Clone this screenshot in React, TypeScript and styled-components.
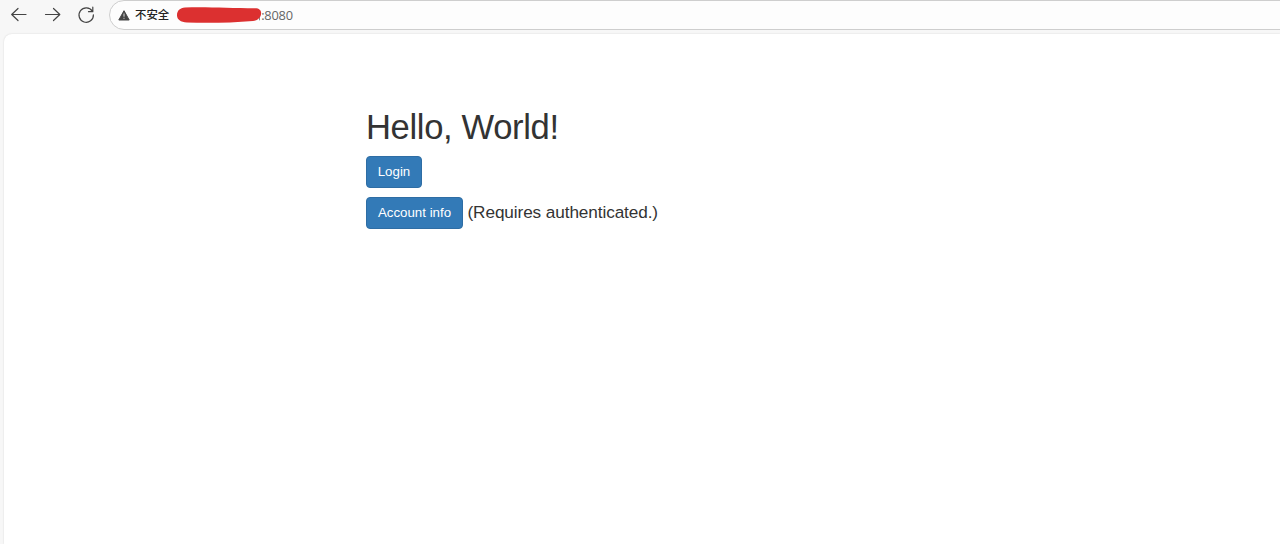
import React from "react";
import styled, { createGlobalStyle } from "styled-components";

const GlobalStyle = createGlobalStyle`
  * { box-sizing: border-box; }
  html, body { margin: 0; height: 100%; overflow: hidden; }
  body { font-family: "Liberation Sans", Arial, sans-serif; color: #333; }
`;

const Browser = styled.div`
  display: flex;
  flex-direction: column;
  height: 100vh;
  background: #f7f7f7;
  overflow: hidden;
`;

const Toolbar = styled.header`
  display: flex;
  align-items: flex-start;
  height: 34px;
  flex: none;
`;

const NavButtons = styled.nav`
  display: flex;
  width: 109px;
  padding: 5px 0 0 9px;
  gap: 14px;
  flex: none;
`;

const NavIcon = styled.svg`
  width: 20px;
  height: 20px;
  flex: none;
  fill: none;
  stroke: #444;
  stroke-width: 1.2;
  stroke-linecap: round;
  stroke-linejoin: round;
`;

const AddressBar = styled.div`
  display: flex;
  align-items: center;
  flex: 1;
  height: 30px;
  margin-right: -20px;
  padding: 0 0 1px 8px;
  background: #fdfdfd;
  border: 1px solid #cecece;
  border-radius: 15px;
`;

const WarningIcon = styled.svg`
  width: 12px;
  height: 12px;
  flex: none;
`;

const SecurityLabel = styled.span`
  margin-left: 5px;
  font: 500 11.4px/16px "Noto Sans CJK SC", sans-serif;
  padding-bottom: 1px;
  color: #222;
`;

const Redaction = styled.svg`
  width: 86px;
  height: 18px;
  margin: 0 -1px 0 7px;
  flex: none;
`;

const Port = styled.span`
  padding-top: 1px;
  font: 12.8px/16px "Open Sans", "Noto Sans", sans-serif;
  letter-spacing: -0.2px;
  color: #666;
`;

const Page = styled.main`
  flex: 1;
  margin-left: 4px;
  padding: 74px 0 0 362px;
  background: #fff;
  border-radius: 8px 0 0 0;
  box-shadow: 0 0 2px rgba(0, 0, 0, 0.14);
`;

const Title = styled.h1`
  margin: 0 0 10px;
  font-size: 34.6px;
  font-weight: 500;
  line-height: 38px;
  letter-spacing: -0.35px;
`;

const Row = styled.div`
  display: flex;
  align-items: center;
  height: 32px;
  margin-bottom: 9px;
`;

const Button = styled.button<{ $width: number }>`
  width: ${(p) => p.$width}px;
  height: 32px;
  padding: 0;
  font: 13.3px/18px "Liberation Sans", Arial, sans-serif;
  color: #fff;
  background: #337ab7;
  border: 1px solid #2e6da4;
  border-radius: 4px;
`;

const Note = styled.span`
  margin: 0 0 3px 4.500px;
  font-size: 17.2px;
  line-height: 20px;
  letter-spacing: -0.1px;
`;

export default function App() {
  return (
    <Browser>
      <GlobalStyle />
      <Toolbar>
        <NavButtons>
          <NavIcon viewBox="0 0 20 20">
            <path d="M17 9.5H2.800M9 3.5l-6.3 6 6.3 6" />
          </NavIcon>
          <NavIcon viewBox="0 0 20 20">
            <path d="M2.500 9.5h14.200M10.500 3.5l6.300 6-6.300 6" />
          </NavIcon>
          <NavIcon viewBox="0 0 20 20">
            <path d="M15.300 6.300A7.200 7.200 0 1 0 16.400 9.800M15.800 2.200v4.500h-4.300" />
          </NavIcon>
        </NavButtons>
        <AddressBar>
          <WarningIcon viewBox="0 0 12 12">
            <path d="M6 1.7 11.2 11H.8Z" fill="#444" stroke="#444" strokeLinejoin="round" />
            <path d="M6 4.5v3.200M6 8.800v1" stroke="#ddd" strokeWidth="1" />
          </WarningIcon>
          <SecurityLabel>不安全</SecurityLabel>
          <Redaction viewBox="0 0 86 18">
            <path d="M83.500 9v5.300" stroke="#888" />
            <path
              d="M9 1.500C28 .5 54 2.200 79 2.200c4.500 0 6.300 2.300 6.100 5.200-.2 4.200-3.600 7-8.100 7.600-22 1.900-46 2.200-66 1.500C4.500 16 1 13.500 1 9.200 1 4.600 4 2 9 1.500Z"
              fill="#dc3030"
            />
          </Redaction>
          <Port>:8080</Port>
        </AddressBar>
      </Toolbar>
      <Page>
        <Title>Hello, World!</Title>
        <Row>
          <Button $width={56}>Login</Button>
        </Row>
        <Row>
          <Button $width={97}>Account info</Button>
          <Note>(Requires authenticated.)</Note>
        </Row>
      </Page>
    </Browser>
  );
}
